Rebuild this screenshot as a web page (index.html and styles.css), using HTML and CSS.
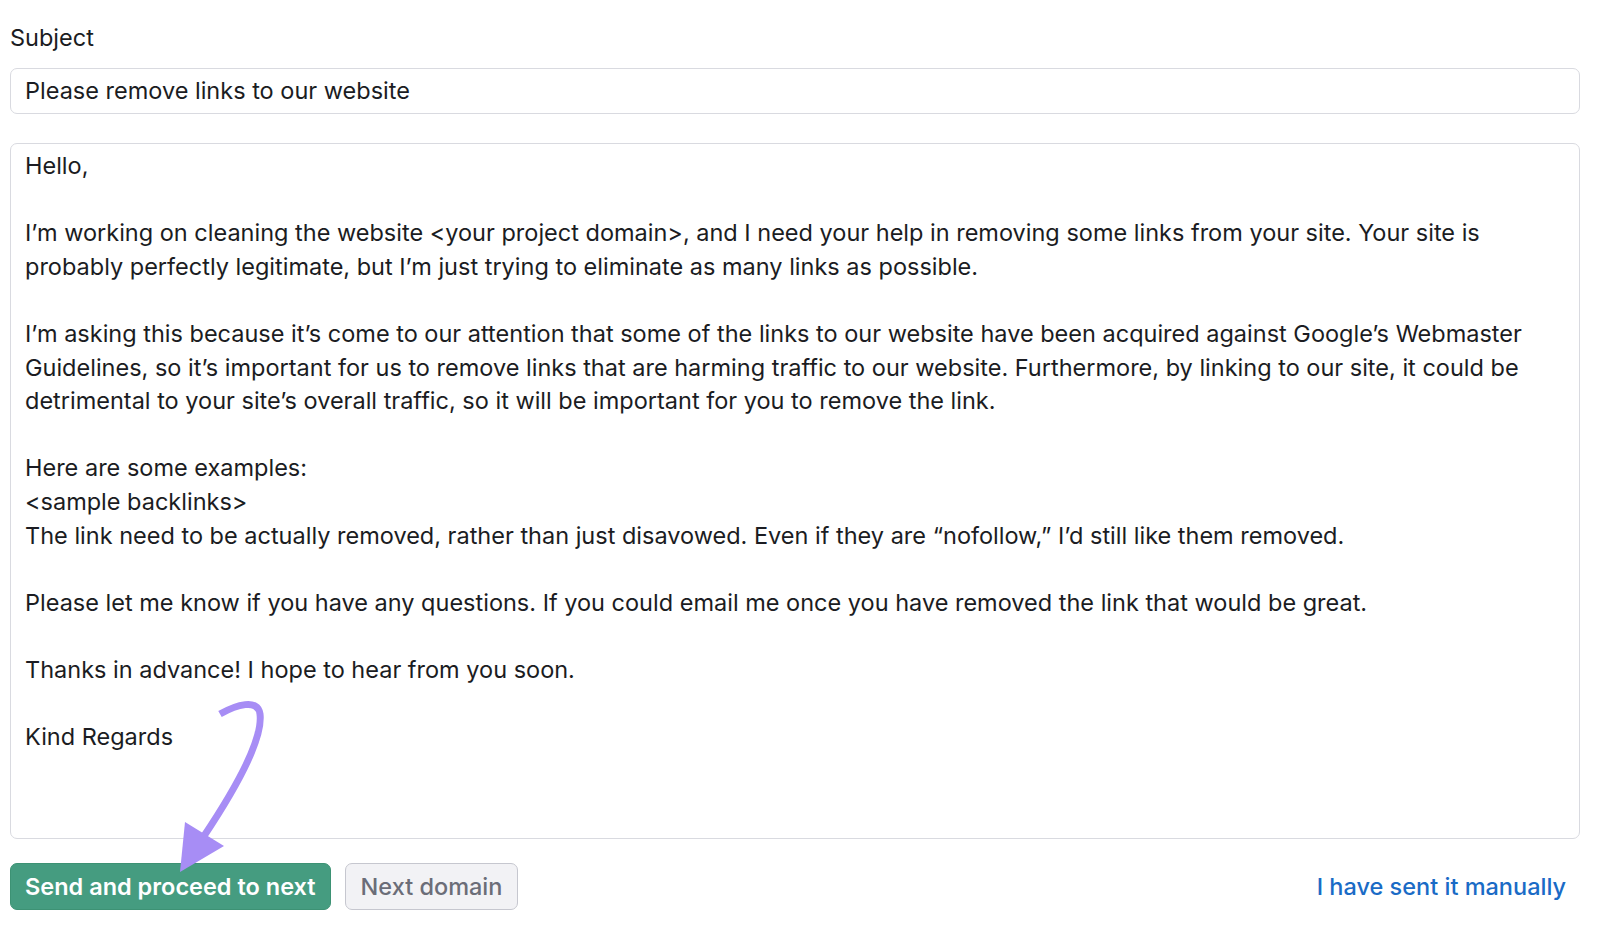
FILE: index.html
```html
<!DOCTYPE html>
<html lang="en">
<head>
<meta charset="utf-8">
<title>Removal email</title>
<link rel="stylesheet" href="styles.css">
</head>
<body>
<div class="page">
  <label class="field-label">Subject</label>
  <div class="subject-input">Please remove links to our website</div>
  <div class="message-box">
    <p>Hello,</p>
    <p>I’m working on cleaning the website &lt;your project domain&gt;, and I need your help in removing some links from your site. Your site is<br>probably perfectly legitimate, but I’m just trying to eliminate as many links as possible.</p>
    <p>I’m asking this because it’s come to our attention that some of the links to our website have been acquired against Google’s Webmaster<br>Guidelines, so it’s important for us to remove links that are harming traffic to our website. Furthermore, by linking to our site, it could be<br>detrimental to your site’s overall traffic, so it will be important for you to remove the link.</p>
    <p>Here are some examples:<br>&lt;sample backlinks&gt;<br>The link need to be actually removed, rather than just disavowed. Even if they are “nofollow,” I’d still like them removed.</p>
    <p>Please let me know if you have any questions. If you could email me once you have removed the link that would be great.</p>
    <p>Thanks in advance! I hope to hear from you soon.</p>
    <p>Kind Regards</p>
  </div>
  <div class="actions">
    <button class="btn btn-primary">Send and proceed to next</button>
    <button class="btn btn-secondary">Next domain</button>
    <a class="manual-link" href="#">I have sent it manually</a>
  </div>
  <svg class="arrow" width="1600" height="925" viewBox="0 0 1600 925" aria-hidden="true">
    <path d="M 220 714 C 236 705, 258 698, 260 714 C 263 738, 238 785, 204 836" fill="none" stroke="#a78df5" stroke-width="7"/>
    <polygon points="185,822 224,846 180,872" fill="#a78df5"/>
  </svg>
</div>
</body>
</html>
```

FILE: styles.css
```css
html, body {
  margin: 0;
  padding: 0;
  background: #ffffff;
}

body {
  font-family: Inter, "Noto Sans", "Liberation Sans", sans-serif;
  font-size: 23.5px;
  color: #1b1c22;
}

.page {
  padding: 21px 20px 0 10px;
  display: flex;
  flex-direction: column;
}

.field-label {
  display: block;
  line-height: 33px;
  margin-bottom: 14px;
}

.subject-input {
  height: 44px;
  border: 1px solid #d9dae0;
  border-radius: 7px;
  padding: 0 14px;
  display: flex;
  align-items: center;
  line-height: 1;
}

.message-box {
  margin-top: 29px;
  height: 689px;
  border: 1px solid #d9dae0;
  border-radius: 7px;
  padding: 5px 14px 0 14px;
  line-height: 33.6px;
}

.message-box p {
  margin: 0 0 33.6px 0;
  white-space: nowrap;
}

.actions {
  margin-top: 24px;
  display: flex;
  align-items: center;
  gap: 14px;
}

.btn {
  font-family: inherit;
  font-size: 23.5px;
  height: 47px;
  border-radius: 7px;
  padding: 0 14px;
  cursor: pointer;
}

.btn-primary {
  background: #459c80;
  border: 1px solid #3d9274;
  color: #ffffff;
  font-weight: 600;
}

.btn-secondary {
  background: #f2f2f5;
  border: 1px solid #c6c7cf;
  color: #6b6d78;
  font-weight: 500;
  padding: 0 15px;
}

.manual-link {
  margin-left: auto;
  margin-right: 14px;
  color: #1a6bc6;
  text-decoration: none;
  font-weight: 500;
}

.arrow {
  position: absolute;
  left: 0;
  top: 0;
  pointer-events: none;
}
```
